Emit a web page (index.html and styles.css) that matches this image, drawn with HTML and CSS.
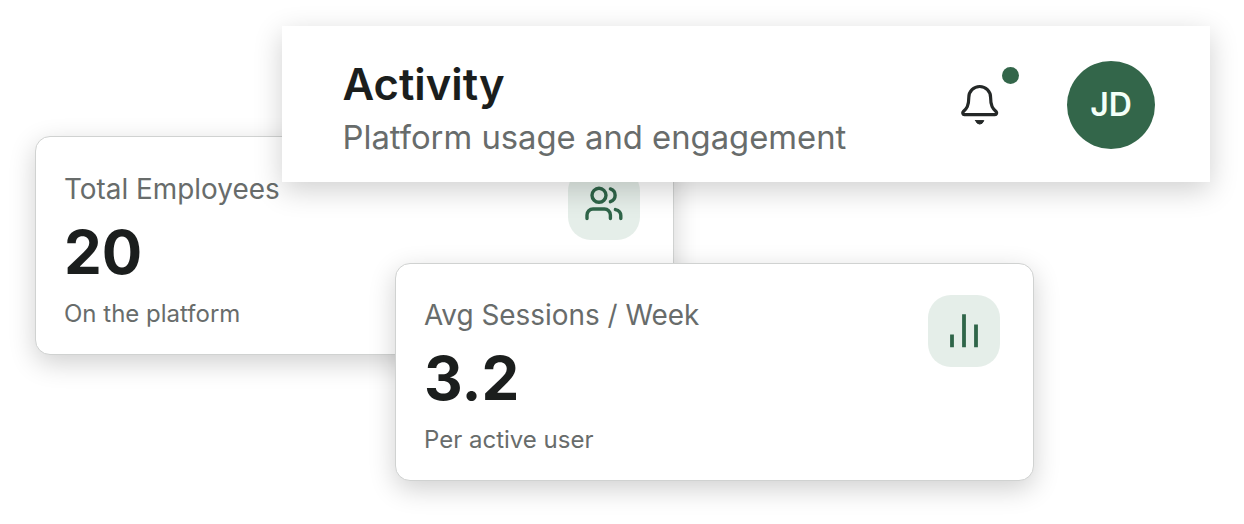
FILE: index.html
```html
<!DOCTYPE html>
<html lang="en">
<head>
<meta charset="utf-8">
<title>Activity</title>
<link rel="stylesheet" href="styles.css">
</head>
<body>
<main class="stage">
  <section class="card employees">
    <div class="copy">
      <div class="label">Total Employees</div>
      <div class="value">20</div>
      <div class="note">On the platform</div>
    </div>
    <div class="tile">
      <svg class="icon" viewBox="0 0 40 40"><circle cx="15" cy="11.3" r="7"/><path d="M3 34.6V31a6 6 0 0 1 6-6h11.4a6 6 0 0 1 6 6v3.6M26.4 4.9a6.7 6.7 0 0 1 0 12.8M31.4 25.6c3.5.8 5.4 3 5.4 6v3"/></svg>
    </div>
  </section>
  <section class="card sessions">
    <div class="copy">
      <div class="label">Avg Sessions / Week</div>
      <div class="value">3.2</div>
      <div class="note">Per active user</div>
    </div>
    <div class="tile">
      <svg class="icon bars" viewBox="0 0 40 40"><path d="M8 36.2V23.5M20 36.2V3.3M32 36.2V13.5"/></svg>
    </div>
  </section>
  <header class="topbar">
    <div class="heading">
      <h1 class="title">Activity</h1>
      <p class="subtitle">Platform usage and engagement</p>
    </div>
    <div class="actions">
      <div class="bell">
        <svg class="bell-icon" viewBox="0 0 41 41"><path d="M9.8 13.5a10.9 11 0 0 1 21.8 0C31.6 22 33.8 24.5 37 27.5c1.3 1.3.6 3.2-1 3.2H5.4c-1.6 0-2.3-1.9-1-3.2C7.6 24.5 9.8 22 9.8 13.5z"/><path class="clapper" d="M16.6 36.6h8.2q-1.3 3.5-4.1 3.5t-4.1-3.5z"/></svg>
        <span class="dot"></span>
      </div>
      <div class="avatar">JD</div>
    </div>
  </header>
</main>
</body>
</html>
```
FILE: styles.css
```css
* { box-sizing: border-box; }
body { margin: 0; background: #fff; font-family: Inter, sans-serif; }
.stage { position: relative; width: 1244px; height: 524px; overflow: hidden; }
.card {
  position: absolute;
  width: 639px;
  padding: 31px 33px 0 28px;
  display: flex;
  justify-content: space-between;
  background: #fff;
  border: 1px solid #d0d2d1;
  border-radius: 15px;
  box-shadow: 0 8px 27px rgba(0, 0, 0, .19);
}
.employees { left: 35px; top: 136px; height: 219px; }
.sessions { left: 395px; top: 262.5px; height: 218px; }
.copy { padding-top: 1.5px; white-space: nowrap; }
.label { font-size: 27.9px; line-height: 38px; color: #686c6b; }
.value { font-size: 60px; line-height: 72px; margin-top: 8px; font-weight: 700; color: #1b1e1d; }
.note { font-size: 24px; line-height: 32px; margin-top: 10px; color: #686c6b; }
.tile {
  width: 72px;
  height: 72px;
  display: grid;
  place-items: center;
  border-radius: 23px;
  background: #e5eee9;
}
.icon, .bell-icon { fill: none; stroke: #2f6549; stroke-width: 3.4; stroke-linecap: round; stroke-linejoin: round; }
.icon { width: 40px; height: 40px; }
.bars { stroke-linecap: butt; stroke-width: 3.8; }
.topbar {
  position: absolute;
  left: 282px;
  top: 26px;
  width: 928px;
  height: 156px;
  padding: 0 55px 0 60.5px;
  display: flex;
  justify-content: space-between;
  background: #fff;
  box-shadow: 0 8px 27px rgba(0, 0, 0, .19);
}
.heading { padding-top: 33px; white-space: nowrap; }
.title { margin: 0; font-size: 43.6px; line-height: 52px; font-weight: 600; color: #1b1e1d; }
.subtitle { margin: 5px 0 0; font-size: 32.8px; line-height: 42px; color: #686c6b; }
.actions { display: flex; gap: 67px; padding-top: 35px; }
.bell { position: relative; width: 41px; height: 41px; margin-top: 23px; }
.bell-icon { display: block; overflow: visible; width: 41px; height: 41px; stroke: #242827; stroke-width: 3.2; }
.clapper { fill: #242827; stroke-width: 1; }
.dot { position: absolute; right: -18.5px; top: -17.5px; width: 17px; height: 17px; border-radius: 50%; background: #33664a; }
.avatar {
  width: 88px;
  height: 88px;
  display: grid;
  place-items: center;
  border-radius: 50%;
  background: #33664a;
  color: #f4fff8;
  font-size: 32px;
  font-weight: 600;
  line-height: 86px;
}
```
